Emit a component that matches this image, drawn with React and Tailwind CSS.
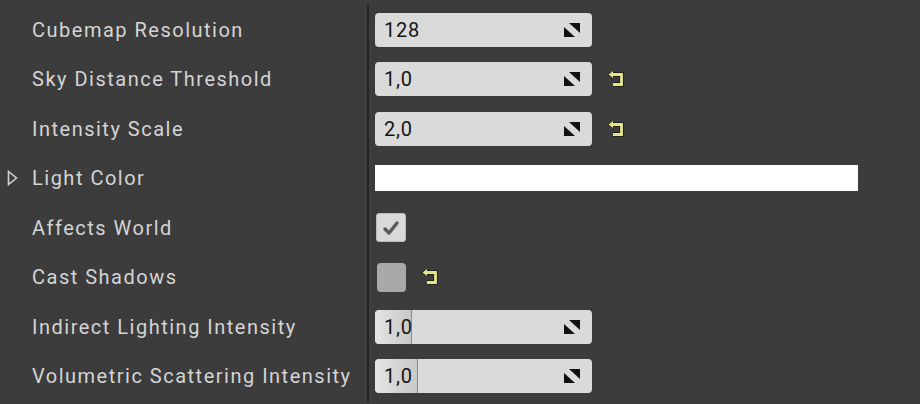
import React from "react";

// spin handle drawn on numeric boxes
const SpinIcon = () => (
  <svg width="18" height="16" viewBox="0 0 18 16" className="shrink-0">
    <polygon points="6,1 17,1 17,11" fill="#111" />
    <polygon points="1,5 1,15 12,15" fill="#111" />
  </svg>
);

const ResetIcon = () => (
  <svg width="17" height="16" viewBox="0 0 17 16" className="shrink-0">
    <path d="M4 3.5 H14.5 V13.5 H6" fill="none" stroke="#23231a" strokeWidth="5" />
    <path d="M0 3.5 L6.5 -1 L6.5 8 Z" fill="#23231a" />
    <path d="M4 3.5 H14.5 V13.5 H6" fill="none" stroke="#e6e68c" strokeWidth="2.8" />
    <path d="M1.5 3.5 L6 0 L6 7 Z" fill="#e6e68c" />
  </svg>
);

const NumberBox = ({ value, fill }) => (
  <div className="relative flex h-[34px] w-[217px] items-center overflow-hidden rounded-[4px] bg-[#dadada] pr-[11px]">
    {fill != null && (
      <div
        className="absolute left-0 top-0 h-full rounded-l-[4px] border-r border-[#8a8a8a] bg-gradient-to-r from-[#e4e4e4] to-[#c8c8c8]"
        style={{ width: fill }}
      />
    )}
    <span className="relative flex-1 pl-[9px] tracking-[0.8px] text-[#161616]">{value}</span>
    <SpinIcon />
  </div>
);

const rows = [
  { label: "Cubemap Resolution", kind: "num", value: "128" },
  { label: "Sky Distance Threshold", kind: "num", value: "1,0", reset: true },
  { label: "Intensity Scale", kind: "num", value: "2,0", reset: true },
  { label: "Light Color", kind: "color", expand: true },
  { label: "Affects World", kind: "check", checked: true },
  { label: "Cast Shadows", kind: "check", checked: false, reset: true },
  { label: "Indirect Lighting Intensity", kind: "num", value: "1,0", fill: 37 },
  { label: "Volumetric Scattering Intensity", kind: "num", value: "1,0", fill: 43 },
];

const Value = ({ row }) => {
  if (row.kind === "num") return <NumberBox value={row.value} fill={row.fill} />;
  if (row.kind === "color")
    return <div className="h-[26px] w-[483px] bg-white" />;
  if (row.checked)
    return (
      <div className="ml-[1px] flex h-[29px] w-[30px] items-center justify-center rounded-[3px] border border-[#bdbdbd] bg-[#d9d9d9]">
        <svg width="18" height="16" viewBox="0 0 18 16">
          <path
            d="M3 9 L7 13 L15 3"
            fill="none"
            stroke="#5a5a5a"
            strokeWidth="3.5"
            strokeLinecap="round"
            strokeLinejoin="round"
          />
        </svg>
      </div>
    );
  return <div className="ml-[2px] h-[29px] w-[29px] rounded-[4px] bg-[#a9a9a9]" />;
};

export default function App() {
  return (
    <div
      className="h-[404px] w-[920px] overflow-hidden bg-[#3c3c3c] pt-[5px] text-[20px]"
      style={{ fontFamily: "Roboto, 'Noto Sans', sans-serif" }}
    >
      {rows.map((row) => (
        <div key={row.label} className="flex h-[49.5px]">
          <div className="flex w-[367px] items-center text-[#d4d4d4]">
            <div className="flex w-[32px] justify-center pr-[7px]">
              {row.expand && (
                <svg width="11" height="16" viewBox="0 0 11 16">
                  <path
                    d="M1.5 1.5 L9.5 8 L1.5 14.5 Z"
                    fill="none"
                    stroke="#cfcfcf"
                    strokeWidth="1.6"
                  />
                </svg>
              )}
            </div>
            <span className="tracking-[1.5px]">{row.label}</span>
          </div>
          <div className="w-[2px] bg-[#242424]" />
          <div className="flex flex-1 items-center gap-[15px] pl-[6px]">
            <Value row={row} />
            {row.reset && <ResetIcon />}
          </div>
        </div>
      ))}
    </div>
  );
}
